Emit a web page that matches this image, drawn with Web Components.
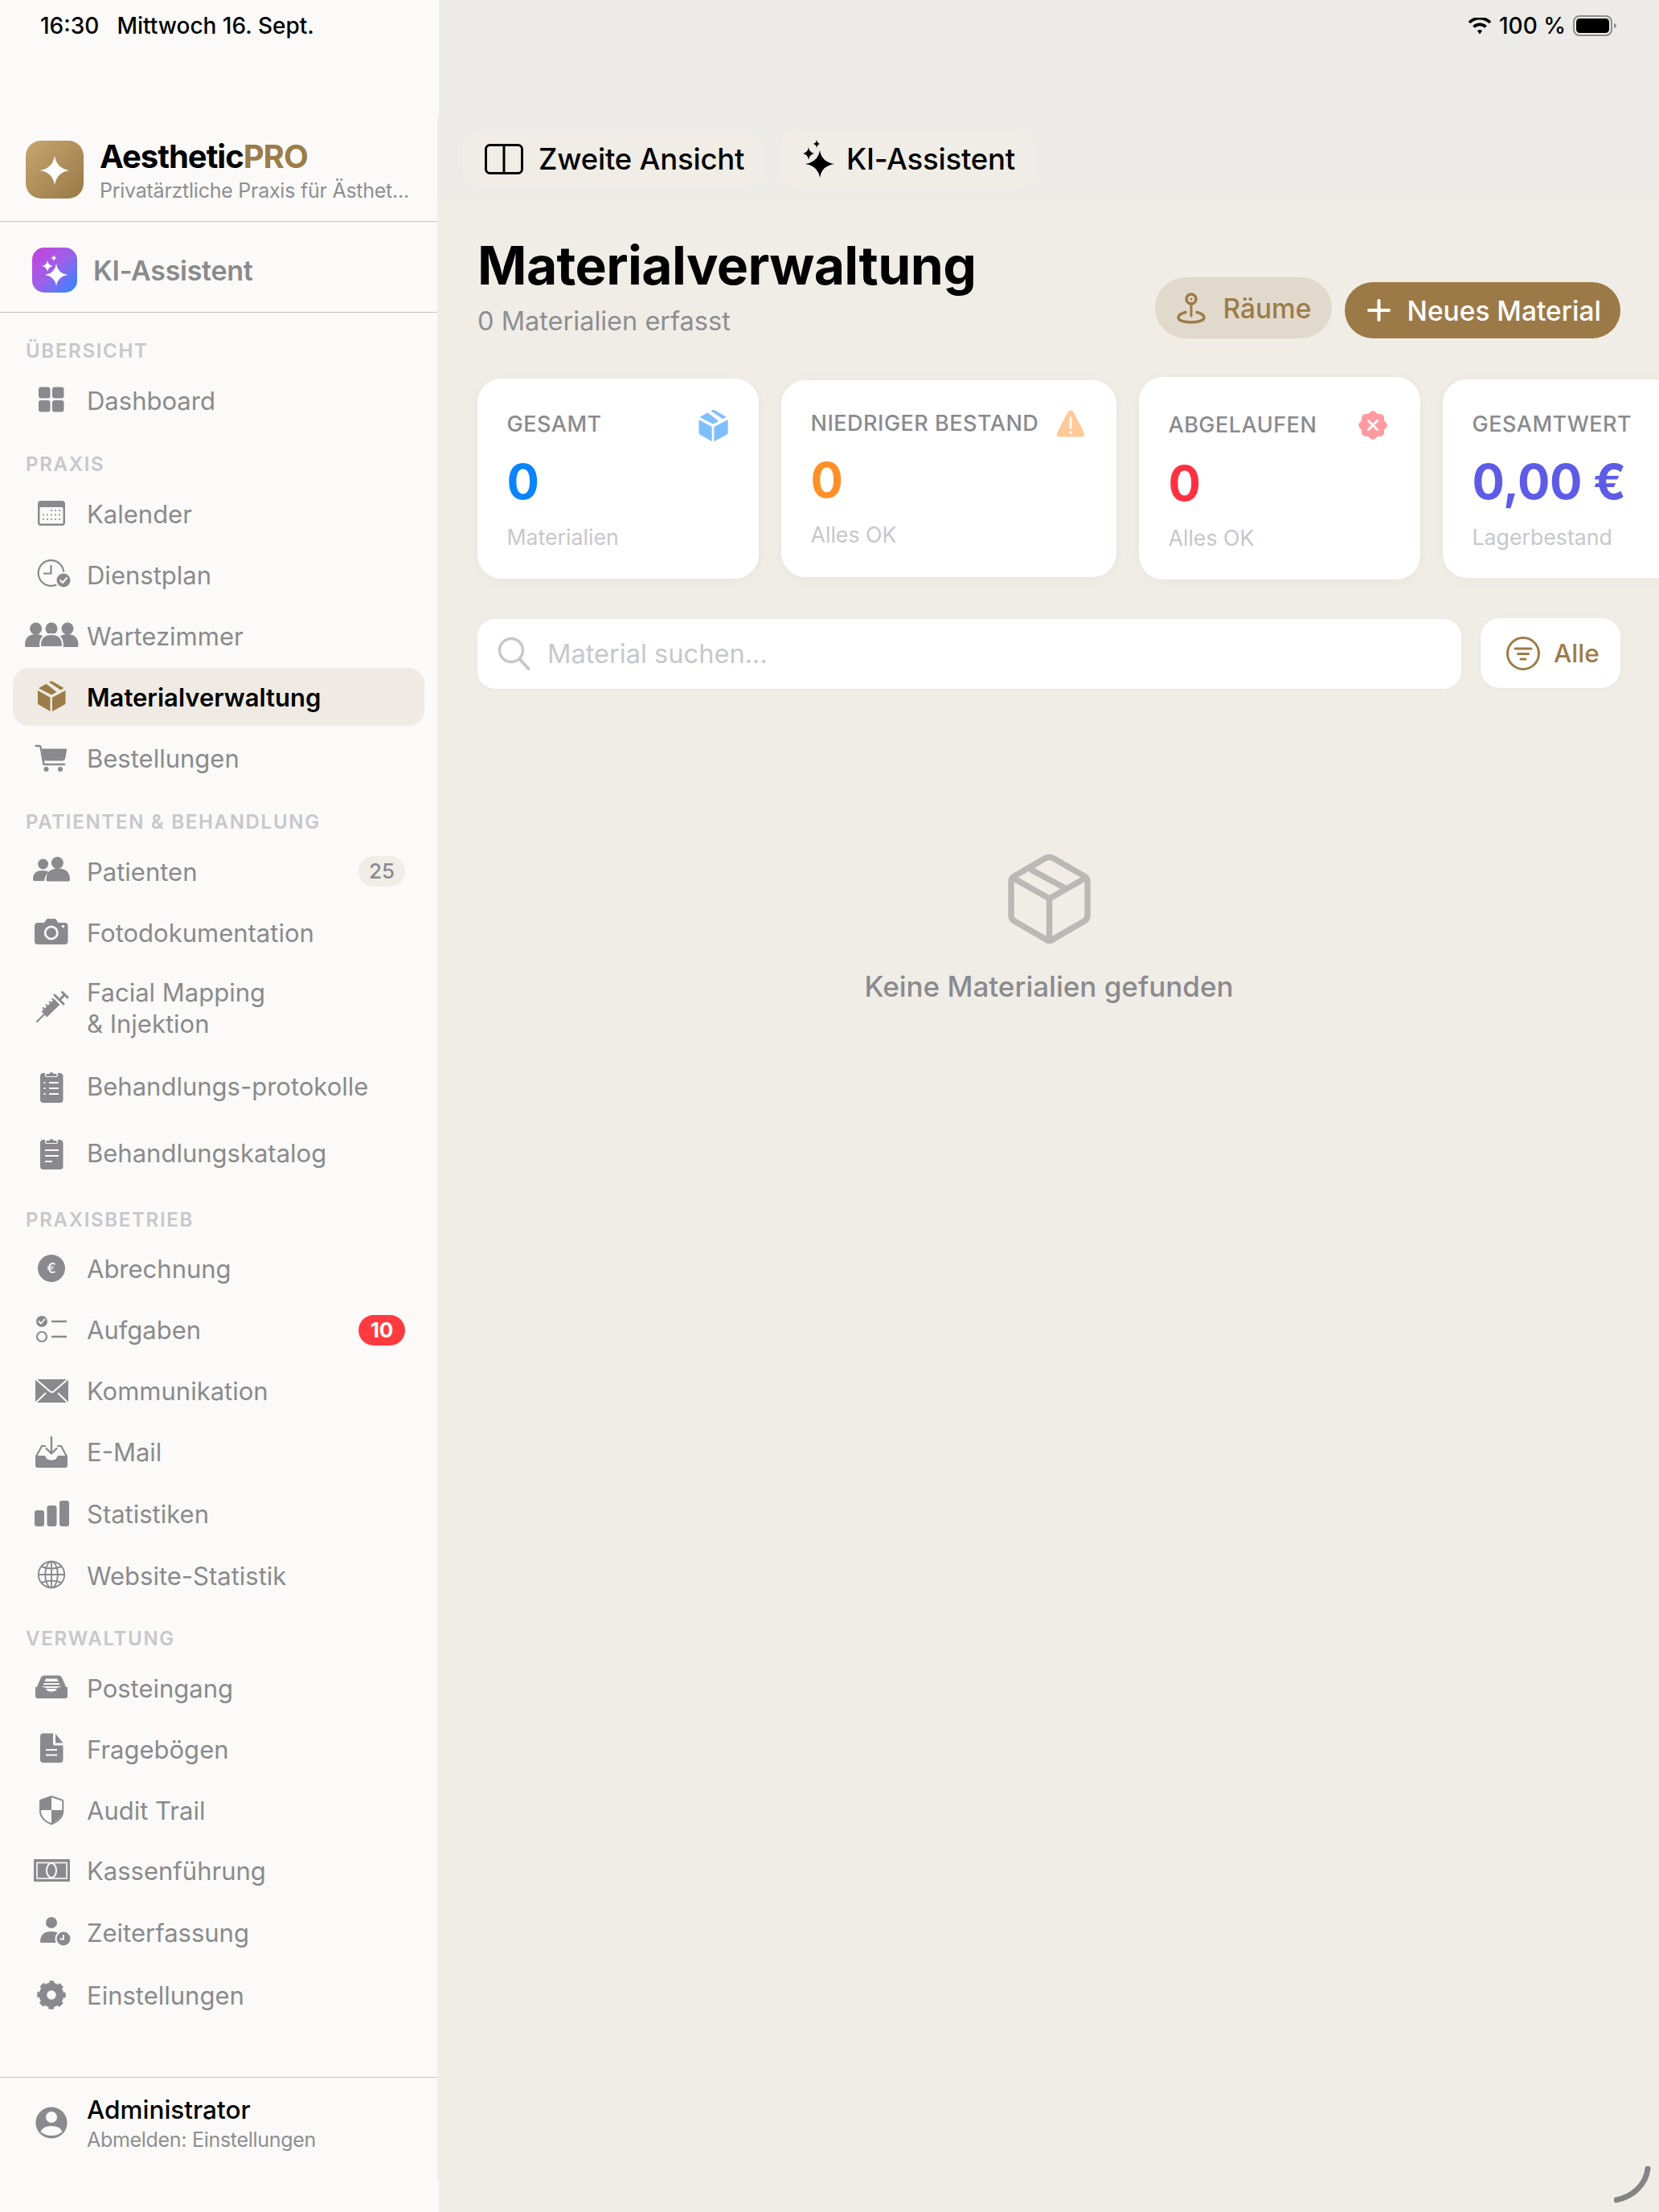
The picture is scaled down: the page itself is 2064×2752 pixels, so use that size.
<!DOCTYPE html>
<html lang="de"><head><meta charset="utf-8"><title>Materialverwaltung</title>
<style>
html,body{margin:0;padding:0;background:#F0EDE6;overflow:hidden}
body{font-family:Inter,"Noto Sans",sans-serif}
</style></head>
<body>
<ap-app>
  <ap-status-bar></ap-status-bar>
  <ap-sidebar>
    <ap-nav-section label="ÜBERSICHT"><ap-nav-item icon="dashboard">Dashboard</ap-nav-item></ap-nav-section>
    <ap-nav-section label="PRAXIS">
      <ap-nav-item icon="calendar" h="73">Kalender</ap-nav-item>
      <ap-nav-item icon="schedule">Dienstplan</ap-nav-item>
      <ap-nav-item icon="waiting">Wartezimmer</ap-nav-item>
      <ap-nav-item icon="box" active>Materialverwaltung</ap-nav-item>
      <ap-nav-item icon="cart">Bestellungen</ap-nav-item>
    </ap-nav-section>
    <ap-nav-section label="PATIENTEN &amp; BEHANDLUNG">
      <ap-nav-item icon="patients" badge="25">Patienten</ap-nav-item>
      <ap-nav-item icon="camera">Fotodokumentation</ap-nav-item>
      <ap-nav-item icon="syringe" h="108">Facial Mapping<br>&amp; Injektion</ap-nav-item>
      <ap-nav-item icon="cliplist" h="78">Behandlungs-protokolle</ap-nav-item>
      <ap-nav-item icon="clipdoc" h="80">Behandlungskatalog</ap-nav-item>
    </ap-nav-section>
    <ap-nav-section label="PRAXISBETRIEB">
      <ap-nav-item icon="euro" h="72">Abrechnung</ap-nav-item>
      <ap-nav-item icon="tasks" badge="10" badge-kind="red">Aufgaben</ap-nav-item>
      <ap-nav-item icon="mail">Kommunikation</ap-nav-item>
      <ap-nav-item icon="inboxdown">E-Mail</ap-nav-item>
      <ap-nav-item icon="stats" h="74">Statistiken</ap-nav-item>
      <ap-nav-item icon="globe" h="71">Website-Statistik</ap-nav-item>
    </ap-nav-section>
    <ap-nav-section label="VERWALTUNG">
      <ap-nav-item icon="tray">Posteingang</ap-nav-item>
      <ap-nav-item icon="doc">Fragebögen</ap-nav-item>
      <ap-nav-item icon="shield">Audit Trail</ap-nav-item>
      <ap-nav-item icon="cash" h="70">Kassenführung</ap-nav-item>
      <ap-nav-item icon="persontime" h="76">Zeiterfassung</ap-nav-item>
      <ap-nav-item icon="gear" h="73">Einstellungen</ap-nav-item>
    </ap-nav-section>
  </ap-sidebar>
  <ap-main>
    <ap-page-header title="Materialverwaltung" sub="0 Materialien erfasst">
      <ap-button kind="soft" icon="pin">Räume</ap-button>
      <ap-button kind="solid" icon="plus">Neues Material</ap-button>
    </ap-page-header>
    <ap-stat-row>
      <ap-stat-card w="350" h="249" pt="3" m1="16.500" m2="15.500" label="GESAMT" value="0" sub="Materialien" color="#0A84FF" icon="carbox" icon-color="#80BFFF"></ap-stat-card>
      <ap-stat-card w="417" h="245" pt="1" m1="16" label="NIEDRIGER BESTAND" value="0" sub="Alles OK" color="#FF9027" icon="warn" icon-color="#FFC998"></ap-stat-card>
      <ap-stat-card w="350" h="252" pt="4" label="ABGELAUFEN" value="0" sub="Alles OK" color="#FF3040" icon="seal" icon-color="#FF9BA0"></ap-stat-card>
      <ap-stat-card w="340" h="247" pt="3" m1="17" m2="15" label="GESAMTWERT" value="0,00 €" sub="Lagerbestand" color="#5E5CE6"></ap-stat-card>
    </ap-stat-row>
    <ap-search-row placeholder="Material suchen..." filter="Alle"></ap-search-row>
    <ap-empty-state>Keine Materialien gefunden</ap-empty-state>
  </ap-main>
  <ap-pencil-mark></ap-pencil-mark>
</ap-app>
<script>
const star=(cx,cy,r,ry=r,k=.13)=>`M${cx} ${cy-ry}Q${cx+r*k} ${cy-ry*k} ${cx+r} ${cy}Q${cx+r*k} ${cy+ry*k} ${cx} ${cy+ry}Q${cx-r*k} ${cy+ry*k} ${cx-r} ${cy}Q${cx-r*k} ${cy-ry*k} ${cx} ${cy-ry}Z`;
const CUT='style="fill:var(--cut,#FBFAF8)"', CUTS='style="stroke:var(--cut,#FBFAF8)"';
const body=(x,w,b,h)=>`M${x} ${b-2}q0-${h} ${w/2}-${h}t${w/2} ${h}q0 2-2 2H${x+2}q-2 0-2-2z`;
const check=(x,y)=>`<path d="M${x-4} ${y}l3 3 5-6" fill="none" ${CUTS} stroke-width="2" stroke-linecap="round" stroke-linejoin="round"/>`;
const clip=`<path d="M26 21h20a4 4 0 0 1 4.500 4v29a4 4 0 0 1-4 4H26a4 4 0 0 1-4-4V25a4 4 0 0 1 4-4z"/><rect x="28" y="18.500" width="16" height="7.500" rx="2" ${CUT} stroke-width="1.500" ${CUTS}/><path d="M29.500 25v-3h4a2.600 2.600 0 0 1 5 0h4v3z"/>`;
const ICONS={
 dashboard:`<rect x="20" y="20.500" width="14.500" height="14" rx="3"/><rect x="37" y="20.500" width="14.500" height="14" rx="3"/><rect x="20" y="37" width="14.500" height="14.500" rx="3"/><rect x="37" y="37" width="14.500" height="14.500" rx="3"/>`,
 calendar:`<rect x="19" y="21" width="34" height="31" rx="4"/><rect x="21.500" y="29" width="29" height="20.500" rx="1.500" ${CUT}/><g>${[26,31,36,41,46].flatMap((x,i)=>[33,38.500,44].map((y,j)=>(i<2&&j==0)?'':`<rect x="${x-.9}" y="${y-.9}" width="1.800" height="1.800"/>`)).join('')}</g>`,
 schedule:`<circle cx="35.500" cy="34" r="15.800" fill="none" stroke="currentColor" stroke-width="2.200"/><path d="M35.500 24v10.500H26" fill="none" stroke="currentColor" stroke-width="2.200"/><circle cx="51" cy="43" r="10.500" ${CUT}/><circle cx="51" cy="43" r="8.500"/>${check(51,43)}`,
 waiting:`<circle cx="16.600" cy="27" r="7.500"/><circle cx="36" cy="27" r="7.500"/><circle cx="56" cy="27" r="7.500"/><path d="${body(3,27,50,14)}"/><path d="${body(42.500,27,50,14)}"/><path d="${body(22,28,50,14)}" stroke-width="2" ${CUTS}/>`,
 box:`<path d="M33 17.800l2-1a2.500 2.500 0 0 1 2 0l2 .9L51.500 25l-4 2.400zM29.500 19.700L42.500 30l-6 3.300a1 1 0 0 1-1 0L20 25.200z"/><path d="M19 28l15.500 8.700V54L20 45.600a2 2 0 0 1-1-1.700zM53.500 28L37 36.700V54l15.500-8.400a2 2 0 0 0 1-1.700z"/>`,
 cart:`<path d="M16.500 21H21a1.500 1.500 0 0 1 1.500 1.200L26.500 44H52" fill="none" stroke="currentColor" stroke-width="2.400" stroke-linecap="round" stroke-linejoin="round"/><path d="M24 24.500h30a1.200 1.200 0 0 1 1.200 1.400L53 37a3 3 0 0 1-3 2.600H26.500z"/><circle cx="29.500" cy="50" r="3"/><circle cx="47" cy="50" r="3"/>`,
 patients:`<circle cx="25.600" cy="28" r="6.500"/><circle cx="43.400" cy="26.500" r="7.500"/><path d="M13 47q0-11 12-11 5 0 8 2-5 3-6 11H15q-2 0-2-2z"/><path d="${body(29.500,29.500,49.500,14)}"/>`,
 camera:`<path d="M19 25h8l2.500-3.800a2.500 2.500 0 0 1 2-1.200h8.500a2.500 2.500 0 0 1 2 1.200L44.500 25h8a4 4 0 0 1 4 4v19a4 4 0 0 1-4 4H19a4 4 0 0 1-4-4V29a4 4 0 0 1 4-4z"/><circle cx="35.800" cy="37.500" r="9" ${CUT}/><circle cx="35.800" cy="37.500" r="6.200"/><circle cx="50.500" cy="29.500" r="1.700" ${CUT}/>`,
 syringe:`<g fill="none" stroke="currentColor" stroke-linecap="round"><path d="M18 54l8.500-8.500" stroke-width="2.200"/><path d="M27 45l16-15.500" stroke-width="9.500" stroke-linecap="butt"/><path d="M40 21l11 11M46 27l5.500-5.500" stroke-width="3"/><path d="M49.500 17.500l6.500 6.500" stroke-width="3"/><path d="M25.500 37l2.500 2.500M29.500 33.200l2.500 2.500M33.500 29.400l2.500 2.500M37.200 25.800l2.500 2.500" stroke-width="2"/></g>`,
 cliplist:`${clip}<g fill="none" ${CUTS} stroke-width="2"><path d="M33 33h12M33 40h12M33 47h12M26.500 33h2M26.500 40h2M26.500 47h2"/></g>`,
 clipdoc:`${clip}<g fill="none" ${CUTS} stroke-width="2.200"><path d="M28 34h17M28 41h17M28 48h9"/></g>`,
 euro:`<circle cx="36" cy="36" r="17"/><text x="36" y="42" text-anchor="middle" font-family="Inter" font-size="17" font-weight="500" ${CUT}>€</text>`,
 tasks:`<circle cx="24" cy="26" r="7"/><path d="M20.500 26l2.500 2.500 4.500-5" fill="none" ${CUTS} stroke-width="1.800" stroke-linecap="round" stroke-linejoin="round"/><circle cx="24" cy="45" r="6" fill="none" stroke="currentColor" stroke-width="2.200"/><path d="M36 26h19M36 45h19" stroke="currentColor" stroke-width="2.500"/>`,
 mail:`<rect x="16" y="22" width="41" height="29"/><path d="M15 20.500l19 16.500a4 4 0 0 0 5 0l19-16.500M15 52.500l14-13.500M58 52.500L44 39" fill="none" ${CUTS} stroke-width="2"/>`,
 inboxdown:`<path d="M17 42l7-13h5M55 42l-7-13h-5" fill="none" stroke="currentColor" stroke-width="2.200"/><path d="M36 18v20M29.500 32l6.500 6.500 6.500-6.500" fill="none" stroke="currentColor" stroke-width="2.400" stroke-linecap="round" stroke-linejoin="round"/><path d="M16 41h11c2 0 2 3 4 4.500s8 1.500 10 0 2-4.500 4-4.500h11v12a3 3 0 0 1-3 3H19a3 3 0 0 1-3-3z"/>`,
 stats:`<rect x="15" y="32" width="12" height="20" rx="3"/><rect x="30.500" y="26" width="12" height="26" rx="3"/><rect x="46" y="20" width="12" height="32" rx="3"/>`,
 globe:`<g fill="none" stroke="currentColor" stroke-width="1.900"><circle cx="36" cy="36" r="16.200"/><ellipse cx="36" cy="36" rx="7.800" ry="16.200"/><path d="M36 20v32M20 36h32M23.500 26q12.500 5 25 0M23.500 46q12.500-5 25 0"/></g>`,
 tray:`<path d="M17 38l6-14a4 4 0 0 1 3.500-2.500h19a4 4 0 0 1 3.500 2.500l6 14z"/><path d="M24 37l5-11.500h14l5 11.500z" ${CUT}/><path d="M27 30h18M25.500 34h21" fill="none" stroke="currentColor" stroke-width="1.800" stroke-linecap="round"/><path d="M16 36h11c2 0 2 3 4 4.500s8 1.500 10 0 2-4.500 4-4.500h11v11a3 3 0 0 1-3 3H19a3 3 0 0 1-3-3z"/>`,
 doc:`<path d="M26 17.500h12v13a2 2 0 0 0 2 2h10.500V50a4 4 0 0 1-4 4H26a4 4 0 0 1-4-4V21.500a4 4 0 0 1 4-4zM41 18l9.500 11.500H41z"/><path d="M29 38h14M29 44.500h14" fill="none" ${CUTS} stroke-width="2.200"/>`,
 shield:`<path d="M36 20l13 4.500a2 2 0 0 1 1.300 1.900V38c0 8-6.500 13.500-13.500 16a2 2 0 0 1-1.600 0C28.500 51.500 22 46 22 38V26.400a2 2 0 0 1 1.300-1.900z" fill="none" stroke="currentColor" stroke-width="2"/><path d="M36 20.500l-12.500 4.300a1.500 1.500 0 0 0-1 1.400V37H36zM36 37v16.500c6.500-2.500 14-8 14-15.500v-1z"/>`,
 cash:`<rect x="14" y="23" width="45" height="28" rx="1"/><rect x="18" y="27.500" width="37" height="19.500" fill="none" stroke-width="1.600" ${CUTS}/><ellipse cx="36" cy="37" rx="6" ry="9" fill="none" stroke-width="2" ${CUTS}/>`,
 persontime:`<circle cx="36" cy="25" r="7"/><path d="M22 49q0-13 14-13 7 0 10 3l-7 10z"/><path d="M22 47h22v3H24q-2 0-2-2z"/><circle cx="51" cy="45" r="10.500" ${CUT}/><circle cx="51" cy="45" r="8.500"/><path d="M51 40v5.500h-4.500" fill="none" ${CUTS} stroke-width="1.800"/>`,
 gear:`<g fill="none" stroke="currentColor"><circle cx="36" cy="36" r="10.500" stroke-width="9.500"/><circle cx="36" cy="36" r="15.500" stroke-width="4.500" stroke-dasharray="6.600 5.574" stroke-dashoffset="3.300" transform="rotate(-90 36 36)"/></g>`,
 admin:`<circle cx="36" cy="36" r="19.600"/><circle cx="36" cy="29" r="7" ${CUT}/><path d="M22.500 47q3-7 13.500-7t13.500 7q-5 5-13.500 5t-13.500-5z" ${CUT}/>`,
};
const S={
 panel:[48,38,`<rect x="1.500" y="1.500" width="45" height="35" rx="5" fill="none" stroke="currentColor" stroke-width="3"/><path d="M24 2v34" stroke="currentColor" stroke-width="3"/>`],
 sparkle:[38,47,`<path d="${star(21,30,18,17)}"/><path d="${star(7,17,7,8)}"/><path d="${star(17,5,4.500,5)}"/>`],
 pin:[36,39,`<circle cx="18" cy="8" r="6" fill="none" stroke="currentColor" stroke-width="3.500"/><path d="M18 8v.01" stroke="currentColor" stroke-width="3" stroke-linecap="round"/><path d="M18 14v15" stroke="currentColor" stroke-width="3" stroke-linecap="round"/><path d="M11 24.500C5 26 2 28.500 2 31c0 3.800 7 6 16 6s16-2.200 16-6c0-2.500-3-5-9-6.500" fill="none" stroke="currentColor" stroke-width="3.500" stroke-linecap="round"/>`],
 plus:[29,28,`<path d="M14.500 2v24M2 14h25" stroke="currentColor" stroke-width="4" stroke-linecap="round"/>`],
 filter:[42,42,`<circle cx="21" cy="21" r="19.500" fill="none" stroke="currentColor" stroke-width="3"/><path d="M11 15h20M14.500 21.500h13M18 28h6" stroke="currentColor" stroke-width="3" stroke-linecap="round"/>`],
 search:[41,41,`<circle cx="17" cy="16" r="14.500" fill="none" stroke="currentColor" stroke-width="3.500"/><path d="M27.500 27l11 12" stroke="currentColor" stroke-width="4" stroke-linecap="round"/>`],
 cubeline:[103,110,`<g fill="none" stroke="currentColor" stroke-width="7.500" stroke-linejoin="round" stroke-linecap="round"><path d="M46 5a12 12 0 0 1 11 0l38 22a8 8 0 0 1 4 7v42a8 8 0 0 1-4 7l-38 22a8 8 0 0 1-11 0L8 83a8 8 0 0 1-4-7V34a8 8 0 0 1 4-7z" transform="translate(0 0)"/><path d="M6 29l45.500 26L97 29M51.500 55v51" stroke-linecap="butt"/><path d="M28 18.500L73 43" stroke-linecap="butt"/></g>`],
 carbox:[36,39,`<g transform="translate(-19.500 -16.500) scale(1.050)">${ICONS.box}</g>`],
 warn:[36,34,`<path d="M14.500 2.500a4 4 0 0 1 7 0l13.500 26a3.500 3.500 0 0 1-3 5H4a3.500 3.500 0 0 1-3-5z"/><path d="M18 10v12" stroke="#fff" stroke-width="3" stroke-linecap="round"/><circle cx="18" cy="28" r="1.800" fill="#fff"/>`],
 seal:[40,40,`<rect x="6" y="6" width="28" height="28" rx="5"/><rect x="6" y="6" width="28" height="28" rx="5" transform="rotate(45 20 20)"/><path d="M14.500 14.500l11 11M25.500 14.500l-11 11" stroke="#fff" stroke-width="2.800" stroke-linecap="round"/>`],
};
const define=(tag,css,html,init)=>customElements.define(tag,class extends HTMLElement{
  connectedCallback(){
    if(this.shadowRoot) return;
    const r=this.attachShadow({mode:'open'});
    const a=n=>this.getAttribute(n);
    r.innerHTML=`<style>${css}</style>`+(typeof html==='function'?html(a,this):html);
    if(init) init(r,this,a);
  }
});
define('ap-icon',`:host{display:block;flex:none;line-height:0}svg{display:block;overflow:visible;fill:currentColor}`,a=>{
  const n=a('name');
  if(S[n]) return `<svg width="${S[n][0]}" height="${S[n][1]}" viewBox="0 0 ${S[n][0]} ${S[n][1]}" aria-hidden="true">${S[n][2]}</svg>`;
  return `<svg width="72" height="72" viewBox="0 0 72 72" aria-hidden="true">${ICONS[n]||''}</svg>`;
});
define('ap-app',`:host{display:flex;position:relative;width:2064px;height:2752px;overflow:hidden;background:#F0EDE6;color:#000;font-family:Inter,"Noto Sans",sans-serif}`,`<slot></slot>`);
define('ap-status-bar',`:host{position:absolute;left:0;top:0;right:0;height:64px;z-index:3;display:flex;align-items:center;font-size:28px;font-weight:500;color:#000;padding:0 52px 0 50px;box-sizing:border-box}
.d{margin-left:22px}.sp{flex:1}.p{margin:0 9px}
.w{color:#000}.b{display:block}`,
`<span>16:30</span><span class="d">Mittwoch 16. Sept.</span><span class="sp"></span>
<svg class="w" width="30" height="21" viewBox="0 0 30 21"><path d="M15 15a3.500 3.500 0 0 1 3 1.500L15 20.500l-3-4A3.500 3.500 0 0 1 15 15z" fill="currentColor"/><path d="M7.500 11.500a10.500 10.500 0 0 1 15 0M2 6a18.500 18.500 0 0 1 26 0" fill="none" stroke="currentColor" stroke-width="3.800"/></svg>
<span class="p">100 %</span>
<svg class="b" width="55" height="26" viewBox="0 0 55 26"><rect x="1" y="1" width="47" height="24" rx="7" fill="none" stroke="#8F8E8A" stroke-width="2"/><rect x="4" y="4" width="41" height="18" rx="4.500" fill="#000"/><path d="M51 10c2 .5 3 1.500 3 3s-1 2.500-3 3z" fill="#8F8E8A"/></svg>`);
define('ap-sidebar',`:host{display:flex;flex:none;flex-direction:column;position:relative;width:546px;height:2752px;background:#FBFAF8;color:#8A8A8E;--cut:#FBFAF8}
:host::after{content:"";position:absolute;right:0;top:147px;bottom:40px;width:2px;background:#F0EDE6;border-left:0}
.col{width:544px;display:flex;flex-direction:column;height:100%}
.brand{height:276px;box-sizing:border-box;padding:175px 0 0 32px;display:flex;gap:20px;border-bottom:1px solid #C6C5C3}
.logo{width:72px;height:72px;border-radius:19px;background:linear-gradient(135deg,#C7A570,#987946);color:#fff;flex:none}
.logo svg{display:block}
.t{font-size:40px;line-height:44px;font-weight:700;color:#000;margin-top:-2px;letter-spacing:-1px}.t b{color:#9C7C48;font-weight:700}
.s{font-size:25px;line-height:32px;color:#8E8E93;margin-top:4px;white-space:nowrap;letter-spacing:-.25px}
.ki{height:113px;box-sizing:border-box;padding:8px 0 0 40px;display:flex;align-items:center;gap:20px;border-bottom:1px solid #C6C5C3;font-size:34px;font-weight:600;color:#8A8A8E;letter-spacing:-.3px}
.kic{width:56px;height:56px;border-radius:15px;background:linear-gradient(135deg,#C93FDC,#9A62EA 50%,#2A88FF);flex:none}
nav{flex:1;padding-top:30px;display:flex;flex-direction:column}
footer{height:168px;box-sizing:border-box;border-top:1px solid #C6C5C3;padding:19px 0 0 28px;display:flex;align-items:flex-start;gap:8px}
.fi{height:74px;display:flex;align-items:center;color:#8A8A8E}
.a{font-size:31.500px;line-height:42px;font-weight:500;color:#000}
.b{font-size:25px;line-height:32px;color:#8E8E93;letter-spacing:-.3px}`,
`<div class="col"><div class="brand"><div class="logo"><svg width="72" height="72" viewBox="0 0 72 72"><path fill="#fff" d="${star(36,37,18.500,18.500)}"/></svg></div><div><div class="t">Aesthetic<b>PRO</b></div><div class="s">Privatärztliche Praxis für Ästhet...</div></div></div>
<div class="ki"><div class="kic"><svg width="56" height="56" viewBox="0 0 56 56"><g fill="#fff"><path d="${star(30,34,14,14)}"/><path d="${star(19,23,7,7)}"/><path d="${star(27,13,4,4)}"/></g></svg></div><span>KI-Assistent</span></div>
<nav><slot></slot></nav>
<footer><div class="fi"><ap-icon name="admin"></ap-icon></div><div><div class="a">Administrator</div><div class="b">Abmelden: Einstellungen</div></div></footer></div>`);
define('ap-nav-section',`:host{display:block;margin-bottom:26.500px}
.l{height:32px;line-height:35px;margin:0 0 10px 32px;font-size:24px;font-weight:600;letter-spacing:1.700px;color:#C7C7CC;white-space:nowrap}
.r{display:flex;flex-direction:column;gap:4px}`,a=>`<div class="l">${a('label').replace('&','&amp;')}</div><div class="r"><slot></slot></div>`);
define('ap-nav-item',`:host{display:flex;align-items:center;box-sizing:border-box;margin:0 16px;width:512px;padding:0 24px 0 12px;gap:8px;font-size:31px;line-height:39px;color:#8A8A8E;border-radius:20px;--h:72px;height:var(--h)}
:host([active]){background:#EFEBE4;color:#000;font-weight:600;--cut:#EFEBE4}
:host([active]) ap-icon{color:#9C7C48}
.tx{flex:1;white-space:nowrap;padding-top:2px}
.bd{height:38px;min-width:58px;box-sizing:border-box;padding:0 10px;margin-top:2px;border-radius:19px;background:#F0EDE6;color:#8A8A8E;font-size:26px;font-weight:500;line-height:38px;text-align:center}
.bd.red{background:#FF3B40;color:#fff;font-weight:700}`,
a=>`<ap-icon name="${a('icon')}"></ap-icon><span class="tx"><slot></slot></span>${a('badge')?`<span class="bd ${a('badge-kind')||''}">${a('badge')}</span>`:''}`,
(r,el,a)=>{if(a('h'))el.style.setProperty('--h',a('h')+'px')});
define('ap-toolbar-btn',`:host{display:flex;align-items:center;box-sizing:border-box;padding-left:28px;border-radius:22px;background:#F0EDE6;font-size:36.500px;font-weight:500;color:#000;letter-spacing:-.2px;white-space:nowrap}`,
a=>`<ap-icon name="${a('icon')}"></ap-icon><span style="margin-left:${a('gap')}px"><slot></slot></span>`,
(r,el,a)=>{el.style.width=a('w')+'px';el.style.height=a('h')+'px'});
define('ap-main',`:host{display:flex;flex-direction:column;flex:1;min-width:0}
.band{height:247px;box-sizing:border-box;padding:160px 0 0 29px;background:#ECEBE7;display:flex;align-items:flex-start}
.inner{height:75px;display:flex;gap:21px;align-items:center}
.c{padding:43px 48px 0 48px}`,
`<div class="band"><div class="inner"><ap-toolbar-btn w="375" h="70" icon="panel" gap="19">Zweite Ansicht</ap-toolbar-btn><ap-toolbar-btn w="317" h="75" icon="sparkle" gap="16">KI-Assistent</ap-toolbar-btn></div></div><div class="c"><slot></slot></div>`);
define('ap-page-header',`:host{display:flex;justify-content:space-between;align-items:flex-end}
h1{margin:0;font-size:66px;line-height:80px;font-weight:700;color:#000;letter-spacing:-.6px}
p{margin:8px 0 0;font-size:32.500px;line-height:44px;color:#8E8E93}
.b{display:flex;gap:16px;align-items:flex-end;margin-bottom:1px}`,
a=>`<div><h1>${a('title')}</h1><p>${a('sub')}</p></div><div class="b"><slot></slot></div>`);
define('ap-button',`:host{display:flex;align-items:center;box-sizing:border-box;border-radius:38px;font-size:33.500px;font-weight:500;white-space:nowrap}
span{padding-top:2px}
:host([kind=soft]){height:76px;padding:0 25px 0 27px;gap:21px;background:#E0D9CC;color:#9C7C48}
:host([kind=solid]){height:70px;padding:0 24px 0 28px;gap:21px;background:#9C7A47;color:#fff}`,
a=>`<ap-icon name="${a('icon')}"></ap-icon><span><slot></slot></span>`);
define('ap-stat-row',`:host{display:flex;gap:28px;align-items:center;height:253px;margin-top:46.500px;width:1600px}`,`<slot></slot>`);
define('ap-stat-card',`:host{flex:none;box-sizing:border-box;background:#fff;border-radius:30px;padding-left:36.500px;padding-right:39px;box-shadow:0 2px 12px rgba(120,110,90,.06);display:flex;flex-direction:column;justify-content:center;white-space:nowrap}
.h{height:36px;display:flex;justify-content:space-between;align-items:center;font-size:27px;line-height:36px;font-weight:500;color:#8A8A8E;letter-spacing:.5px}
.v{height:72px;font-size:60px;line-height:72px;font-weight:700;letter-spacing:-.3px}
.s{height:36px;font-size:26.700px;line-height:36px;color:#C7C7CC}`,
a=>`<div class="h"><span>${a('label')}</span>${a('icon')?`<ap-icon name="${a('icon')}" style="color:${a('icon-color')}"></ap-icon>`:''}</div><div class="v" style="color:${a('color')};margin:${a('m1')||18}px 0 ${a('m2')||14}px">${a('value')}</div><div class="s">${a('sub')}</div>`,
(r,el,a)=>{el.style.width=a('w')+'px';el.style.height=a('h')+'px';el.style.paddingTop=(2*(+a('pt')))+'px'});
define('ap-search-row',`:host{display:flex;gap:24px;margin-top:47.500px;align-items:flex-start}
.s{flex:1;height:87px;margin-top:1px;box-sizing:border-box;background:#fff;border-radius:22px;padding-left:25px;display:flex;align-items:center;gap:21px;color:#C7C7CC;font-size:32.600px;box-shadow:0 1px 6px rgba(120,110,90,.05)}
.s span{padding-bottom:2px}
.f{width:174px;height:87px;box-sizing:border-box;background:#fff;border-radius:24px;padding-left:32px;display:flex;align-items:center;gap:17px;color:#9C7C48;font-size:31.500px;font-weight:500;box-shadow:0 1px 6px rgba(120,110,90,.05)}`,
a=>`<div class="s"><ap-icon name="search"></ap-icon><span>${a('placeholder')}</span></div><div class="f"><ap-icon name="filter"></ap-icon><span>${a('filter')}</span></div>`);
define('ap-empty-state',`:host{display:flex;flex-direction:column;align-items:center;margin-top:206px;color:#8A8A8E;font-size:35px;line-height:44px;font-weight:500}
ap-icon{color:#BAB9B6}span{margin-top:32px}`,`<ap-icon name="cubeline"></ap-icon><span><slot></slot></span>`);
define('ap-pencil-mark',`:host{position:absolute;right:10px;bottom:11px;z-index:2;display:block;line-height:0}`,`<svg width="46" height="46" viewBox="0 0 46 46"><path d="M42 3C40 22 24 38 3 42" fill="none" stroke="#848484" stroke-width="7" stroke-linecap="round"/></svg>`);
</script>
</body></html>
